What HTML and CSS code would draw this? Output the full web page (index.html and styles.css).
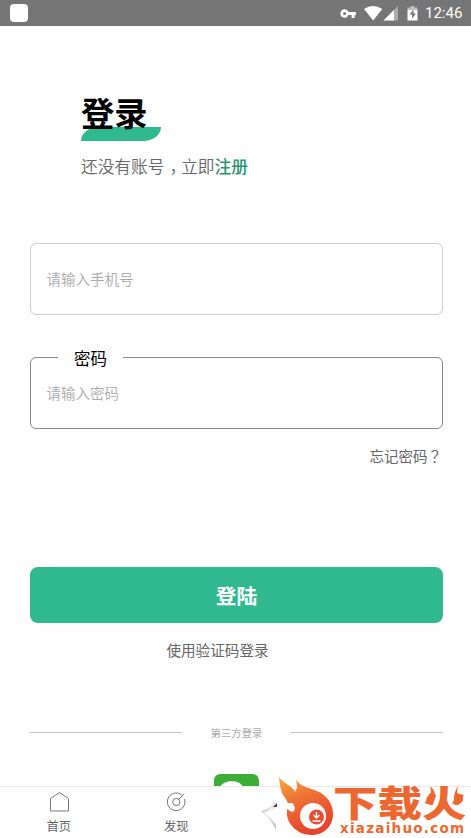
FILE: index.html
```html
<!DOCTYPE html>
<html lang="zh-CN">
<head>
<meta charset="utf-8">
<title>登录</title>
<link rel="stylesheet" href="styles.css">
</head>
<body>
<div class="screen">
  <header class="status">
    <span class="app-dot"></span>
    <svg class="status-icons" width="82" height="26" viewBox="0 0 82 26">
      <g fill="#fff">
        <path fill-rule="evenodd" d="M5.500 9.200a4.200 4.200 0 0 1 4 2.900H17v3h-1.400V18h-3v-2.900H9.500a4.200 4.200 0 1 1-4-5.900zM5.500 12a1.500 1.500 0 1 0 0 3 1.500 1.500 0 0 0 0-3z"/>
        <path d="M25 9Q34 3 43.300 9L34.200 20.500z"/>
        <path d="M59 6v14.500H44.500z" opacity=".4"/>
        <path d="M55 10v10.500H44.500z"/>
        <path fill-rule="evenodd" d="M68.500 9.500h10V20.500h-10zM74.500 9.500l-4 5H73v4l4-5h-2.500z"/>
        <path d="M71.500 6h4v1.500h3v2h-10v-2h3z" fill="#bdbdbd"/>
      </g>
    </svg>
    <span class="clock">12:46</span>
  </header>
  <main class="content">
    <section class="intro">
      <h1>登录</h1>
      <div class="swash"></div>
      <p>还没有账号<span class="comma">，</span>立即<a>注册</a></p>
    </section>
    <div class="field phone">请输入手机号</div>
    <div class="field password"><span class="label">密码</span>请输入密码</div>
    <a class="forgot">忘记密码<span class="mark" lang="zh-TW">？</span></a>
    <div class="submit">登陆</div>
    <a class="code-login">使用验证码登录</a>
    <div class="divider"><i></i><span>第三方登录</span><i></i></div>
    <div class="wechat">
      <svg width="45" height="12" viewBox="0 0 45 12"><path d="M0 13V7Q0 0 7 0H38Q45 0 45 7V13z" fill="#3cae36"/><path d="M6 13C9 5.500 26 5 29 13z" fill="#fff"/></svg>
    </div>
  </main>
  <nav class="tabs">
    <a><svg width="24" height="24" viewBox="0 0 24 24"><path d="M3.500 8.500L12.500 2.500l9 6v12.500h-18z"/></svg><span>首页</span></a>
    <a><svg width="24" height="24" viewBox="0 0 24 24"><path d="M17.500 4.800A8.800 8.800 0 1 0 20.500 9M14.500 9.500L20 3.800"/><circle cx="12.300" cy="12" r="3.600"/></svg><span>发现</span></a>
  </nav>
  <div class="watermark">
    <svg class="flame" width="76" height="66" viewBox="0 0 76 66">
      <defs>
        <linearGradient id="fire" x1="0" y1="0" x2="0.400" y2="1"><stop offset="0" stop-color="#f7ac3e"/><stop offset=".4" stop-color="#ee7535"/><stop offset="1" stop-color="#e8432d"/></linearGradient>
        <linearGradient id="shade" x1="0" y1="0" x2="1" y2="1"><stop offset="0" stop-color="#aaa"/><stop offset=".5" stop-color="#eee"/><stop offset="1" stop-color="#bbb"/></linearGradient>
      </defs>
      <path d="M1 39Q10 37 16 28V58Q12 49 1 39z" fill="url(#shade)"/>
      <path d="M3 40Q10 41 17 34V54Q11 45 3 40z" fill="#fff"/>
      <path d="M13 35l4-4v4z" fill="#444"/>
      <path d="M19 5C24 12 33 14 35 20C38 16 37 12 36 8C41 15 50 16 57 19C67 23 73 32 73 42C73 54 64 63 52 63C37 63 28 52 27 43C26 35 30 31 25 26C20 19 20 12 19 5z" fill="url(#fire)"/>
      <path d="M24 27C26 32 29 31 32 31C34 32 36 36 34 39C31 42 29 36 26 37Q24 32 24 27z" fill="#fff"/>
      <circle cx="53" cy="44" r="13" fill="#fff"/>
      <circle cx="56.500" cy="45" r="7.500" fill="#e94c31"/>
      <path d="M56.500 40v6M53.500 43l3 3 3-3M52.500 49h8" fill="none" stroke="#fff" stroke-width="1.400"/>
    </svg>
    <div class="brand">
      <strong>下载火</strong>
      <span>xiazaihuo.com</span>
    </div>
    <svg class="sparks" width="42" height="20" viewBox="0 0 42 20"><path d="M6 0C13 6 11 10 9 19C1 18 1 12 5 9L6 12Q8 7 6 0zM34 0C30 7 29 11 31 19C40 18 40 13 38 8L35 12Q32 8 34 0z" fill="#ec6830"/></svg>
  </div>
</div>
</body>
</html>
```
FILE: styles.css
```css
* { box-sizing: border-box; }
body {
  margin: 0;
  background: #fefefe;
  color: #666;
  font-family: "Noto Sans CJK SC", sans-serif;
}
.screen {
  position: relative;
  display: flex;
  flex-direction: column;
  width: 471px;
  height: 838px;
  overflow: hidden;
}
.status {
  display: flex;
  flex: none;
  align-items: center;
  height: 26px;
  padding: 0 8px 0 10px;
  background: #757575;
}
.app-dot {
  width: 18px;
  height: 18px;
  margin-right: auto;
  border-radius: 4px;
  background: #fff;
}
.status-icons { margin-right: 4px; }
.clock {
  width: 38px;
  color: #fff;
  font: 15px/28px Roboto, sans-serif;
  white-space: nowrap;
}
.content {
  display: flex;
  flex: none;
  flex-direction: column;
  height: 760px;
  padding: 0 28px 0 30px;
}
.intro { padding: 67px 0 0 51px; }
h1 {
  position: relative;
  z-index: 1;
  margin: 0;
  height: 34px;
  color: #000;
  font-size: 33.3px;
  font-weight: 700;
  line-height: 38px;
}
.swash {
  width: 80px;
  height: 14px;
  border-radius: 18px 0 18px 0 / 14px 0 14px 0;
  background: #30b98f;
}
.intro p {
  margin: 14px 0 0;
  font-size: 16.7px;
  font-weight: 350;
  line-height: 23px;
}
.intro a {
  color: #2a9472;
  font-weight: 500;
}
.comma {
  padding: 0 3.35px 0 5px;
  font-feature-settings: "halt";
}
.field {
  flex: none;
  width: 413px;
  height: 72px;
  padding-left: 15.5px;
  border: 1px solid #ccc;
  border-radius: 6px;
  color: #aaa;
  font-size: 14.5px;
  font-weight: 350;
  line-height: 70px;
}
.phone { margin-top: 65px; }
.password {
  position: relative;
  margin-top: 42px;
  border-color: #888;
}
.label {
  position: absolute;
  top: -13px;
  left: 27px;
  width: 65px;
  background: #fefefe;
  color: #000;
  font-size: 16.5px;
  font-weight: 400;
  line-height: 26px;
  text-align: center;
}
.forgot {
  align-self: flex-end;
  margin: 16px 1px 0 0;
  font-size: 14.5px;
  line-height: 22px;
}
.mark { font-family: "Noto Sans CJK TC", sans-serif; }
.submit {
  height: 56px;
  margin-top: 100px;
  border-radius: 8px;
  background: #30b98f;
  color: #fff;
  font-size: 20.7px;
  font-weight: 700;
  line-height: 57px;
  text-align: center;
}
.code-login {
  align-self: center;
  margin: 16px 38px 0 0;
  font-size: 14.6px;
  line-height: 22px;
}
.divider {
  display: flex;
  align-items: center;
  justify-content: space-between;
  height: 20px;
  margin-top: 62px;
  color: #aaa;
  font-size: 10.4px;
}
.divider i {
  width: 152px;
  height: 1px;
  background: #c5c5c5;
}
.wechat {
  display: flex;
  justify-content: center;
  margin-top: 32px;
}
.tabs {
  display: flex;
  flex: none;
  height: 52px;
  border-top: 1px solid #e8e8e8;
  background: #fefefe;
}
.tabs a {
  display: flex;
  flex: none;
  flex-direction: column;
  align-items: center;
  width: 117.5px;
  padding-top: 3px;
  font-size: 12.3px;
  line-height: 24px;
}
.tabs svg {
  fill: none;
  stroke: #777;
  stroke-width: 1;
}
.watermark {
  position: absolute;
  top: 772px;
  left: 260px;
  display: flex;
  width: 211px;
  height: 66px;
}
.flame { flex: none; }
.brand {
  display: flex;
  flex-direction: column;
  margin-left: -3px;
  padding-top: 10px;
  color: #ec6830;
  white-space: nowrap;
}
.brand strong {
  width: 134px;
  height: 40px;
  font-size: 44.5px;
  font-weight: 900;
  line-height: 38px;
  transform: scaleY(0.82);
}
.brand span {
  padding-left: 7px;
  font: bold 13.5px/13px "DejaVu Sans", sans-serif;
  letter-spacing: 1.25px;
}
.sparks {
  position: absolute;
  top: 14px;
  left: 164px;
}
```
